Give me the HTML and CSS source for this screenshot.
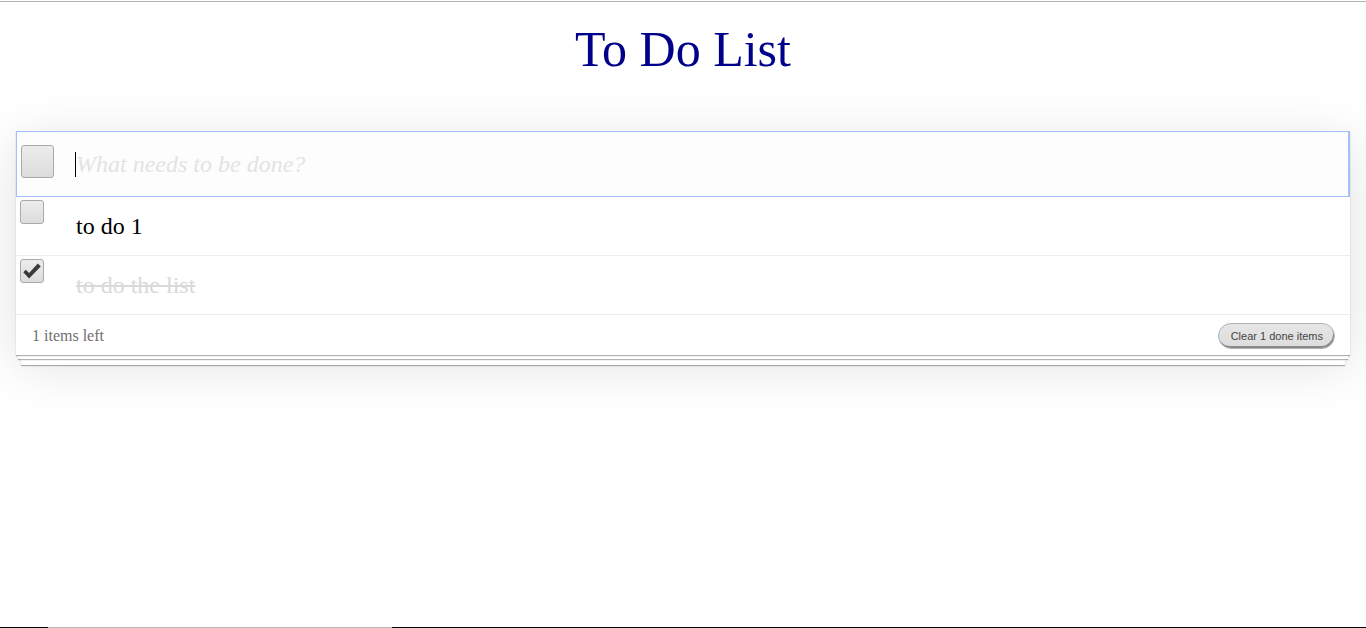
FILE: index.html
```html
<!DOCTYPE html>
<html>
<head>
<meta charset="utf-8">
<title>To Do List</title>
<link rel="stylesheet" href="styles.css">
</head>
<body>
<div class="topline"></div>
<h1 class="title">To Do List</h1>
<section class="card">
  <div class="new-row">
    <span class="box box-big"></span>
    <div class="new-input"><span class="caret"></span><span class="placeholder">What needs to be done?</span></div>
  </div>
  <ul class="list">
    <li class="item">
      <span class="box box-small"></span>
      <span class="item-text">to do 1</span>
    </li>
    <li class="item done">
      <span class="box box-small checked">
        <svg viewBox="0 0 24 24" width="20" height="20"><path d="M1.5 13.5 L4.5 10.5 L8.5 14.5 L19 3 L22.5 6.5 L8.5 21 Z" fill="#3a3a3a"/></svg>
      </span>
      <span class="item-text">to do the list</span>
    </li>
  </ul>
  <footer class="footer">
    <span class="left">1 items left</span>
    <button class="clear">Clear 1 done items</button>
  </footer>
</section>
<div class="taskbar"><span class="tb-gray"></span></div>
</body>
</html>
```
FILE: styles.css
```css
html, body {
  margin: 0;
  padding: 0;
  background: #fff;
}
html {
  height: 100%;
}
body {
  min-height: 100%;
  font-family: "Liberation Serif", "Times New Roman", serif;
}
.topline {
  height: 1px;
  margin-top: 1px;
  background: #b4b4b4;
}
.title {
  margin: 0;
  padding-top: 18px;
  font-size: 50px;
  line-height: 58px;
  font-weight: normal;
  text-align: center;
  color: #00008b;
}
.card {
  margin: 53px 16px 0 16px;
  background: #fff;
  position: relative;
  box-shadow:
    0 1px 1px rgba(0,0,0,0.3),
    0 6px 0 -2px #fff,
    0 7px 1px -2px rgba(0,0,0,0.3),
    0 15px 0 -5px #fff,
    0 16px 1px -5px rgba(0,0,0,0.3),
    0 10px 50px rgba(0,0,0,0.12);
}
.new-row {
  display: flex;
  align-items: flex-start;
  height: 64px;
  border: 1px solid #a3c1fb;
  border-right-width: 2px;
  background: #fdfdfd;
}
.box {
  display: block;
  box-sizing: border-box;
  border: 1px solid #a9a9a9;
  border-radius: 3px;
  background: linear-gradient(#ececec, #dcdcdc);
  flex: none;
}
.box-big {
  width: 33px;
  height: 33px;
  margin: 13px 0 0 4px;
}
.new-input {
  display: flex;
  align-items: center;
  margin: 18px 0 0 21px;
  height: 28px;
}
.caret {
  width: 1px;
  height: 25px;
  background: #000;
}
.placeholder {
  font-style: italic;
  font-size: 24px;
  line-height: 28px;
  color: #e3e3e3;
}
.list {
  list-style: none;
  margin: 0;
  padding: 0;
}
.item {
  display: flex;
  align-items: flex-start;
  border-bottom: 1px solid #ececec;
}
.box-small {
  width: 24px;
  height: 24px;
  margin: 3px 0 0 4px;
  display: flex;
  align-items: center;
  justify-content: center;
}
.item-text {
  margin-left: 32px;
  padding: 15px 0;
  font-size: 24px;
  line-height: 28px;
  color: #000;
}
.done .item-text {
  color: #d9d9d9;
  text-decoration: line-through;
}
.footer {
  display: flex;
  align-items: center;
  justify-content: space-between;
  height: 40px;
  padding: 0 15px 0 16px;
}
.left {
  font-size: 16px;
  color: #707070;
  padding-top: 1px;
}
.clear {
  font-family: "Liberation Sans", Arial, sans-serif;
  font-size: 11px;
  color: #444;
  height: 26px;
  padding: 0 11px 0 12px;
  border: 1px solid #b0b0b0;
  border-radius: 13px;
  background: linear-gradient(#e6e6e6, #dcdcdc);
  box-shadow: inset -1px -2px 0 #8a8a8a;
  margin-top: 1px;
}
.taskbar {
  position: fixed;
  left: 0;
  right: 0;
  bottom: 0;
  height: 1px;
  background: #000;
}
.tb-gray {
  position: absolute;
  left: 48px;
  width: 344px;
  top: 0;
  height: 1px;
  background: #b8b8b8;
}
```
